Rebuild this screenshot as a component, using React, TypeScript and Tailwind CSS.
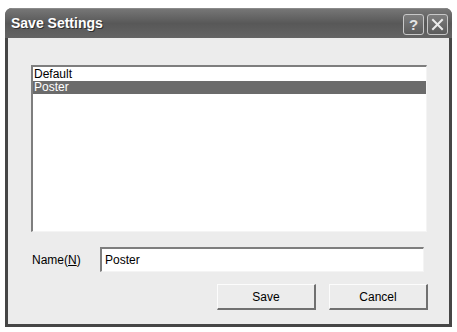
import React from 'react'

export default function App() {
    const items = ["Default", "Poster"]
    const selected = "Poster"

    return (
        <div className="w-[457px] h-[332px] bg-white pt-[8px] pl-[5px]" style={{ fontFamily: '"Liberation Sans", Arial, sans-serif' }}>
            <div className="w-[447px] h-[319px] flex flex-col rounded-t-[7px] overflow-hidden bg-[#464646]">
                {renderTitleBar()}
                {renderBody()}
            </div>
        </div>
    )

    function renderTitleBar() {
        return (
            <div className="h-[30px] shrink-0 flex items-center pl-[6px] pr-[4px] bg-gradient-to-b from-[#767676] via-[#585858] to-[#646464] border-t border-[#8a8a8a]">
                <span className="text-white font-bold text-[14px] [text-shadow:1px_1px_0_#2e2e2e]">Save Settings</span>
                <div className="ml-auto flex gap-[3px] mt-[1px]">
                    <div className="w-[21px] h-[21px] rounded-[3px] border border-[#c8c8c8] bg-gradient-to-b from-[#7e7e7e] to-[#5c5c5c] flex items-center justify-center text-[#e4e4e4] font-bold text-[15px] leading-none">?</div>
                    <div className="w-[21px] h-[21px] rounded-[3px] border border-[#c8c8c8] bg-gradient-to-b from-[#7e7e7e] to-[#5c5c5c] flex items-center justify-center">
                        <svg width="13" height="13" viewBox="0 0 13 13">
                            <path d="M2 2 L11 11 M11 2 L2 11" stroke="#ececec" strokeWidth="2" strokeLinecap="square" />
                        </svg>
                    </div>
                </div>
            </div>
        )
    }

    function renderBody() {
        return (
            <div className="flex-1 mx-[3px] mb-[3px] bg-[#ececec] flex flex-col pl-[23px] pr-[20px] pt-[27px] text-[12px] text-black">
                <div className="h-[167px] w-[396px] bg-white border-t-[2px] border-l-[2px] border-[#7e7e7e] border-r border-b border-r-[#f4f4f4] border-b-[#f4f4f4] pt-[1px]">
                    {items.map(item => (
                        <div key={item} className={item == selected ? "h-[13px] leading-[13px] bg-[#6b6b6b] text-white pl-[1px]" : "h-[13px] leading-[13px] pl-[1px]"}>{item}</div>
                    ))}
                </div>
                <div className="mt-[15px] flex items-center h-[25px]">
                    <span className="w-[69px] pl-[1px]">Name(<span className="underline">N</span>)</span>
                    <div className="h-[25px] w-[324px] bg-white border-t-[2px] border-l-[2px] border-[#7e7e7e] border-r border-b border-r-[#f4f4f4] border-b-[#f4f4f4] flex items-center pl-[3px]">Poster</div>
                </div>
                <div className="mt-[12px] flex justify-end gap-[13px] pr-[1px]">
                    {renderButton("Save")}
                    {renderButton("Cancel")}
                </div>
            </div>
        )
    }

    function renderButton(label: string) {
        return (
            <div className="w-[99px] h-[26px] flex items-center justify-center bg-[#ececec] border border-t-[#fcfcfc] border-l-[#fcfcfc] border-r-[2px] border-b-[2px] border-r-[#707070] border-b-[#707070]">{label}</div>
        )
    }
}
